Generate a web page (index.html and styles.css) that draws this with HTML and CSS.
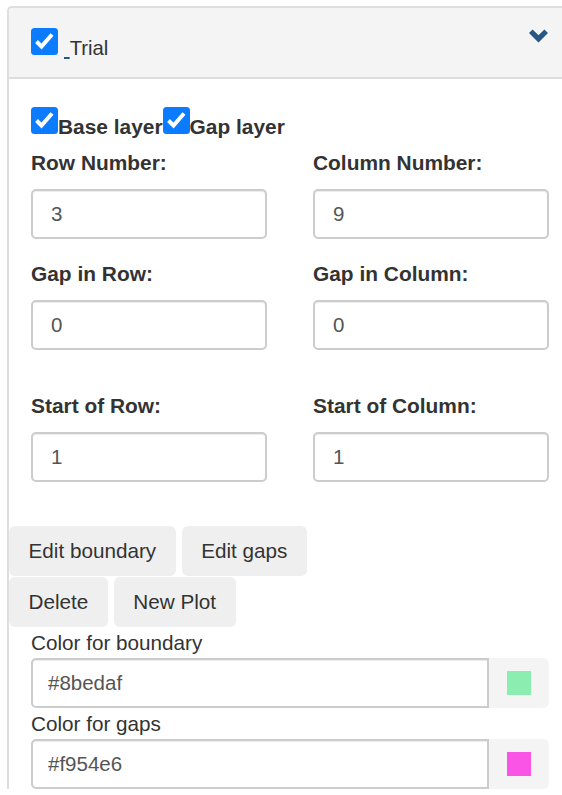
FILE: index.html
```html
<!DOCTYPE html>
<html>
<head>
<meta charset="utf-8">
<link rel="stylesheet" href="styles.css">
</head>
<body>
<div class="panel">
  <div class="panel-heading">
    <div class="title"><svg class="cb" width="27" height="27" viewBox="0 0 27 27"><rect x="0" y="0" width="27" height="27" rx="3.5" fill="#0b7bff"/><polyline points="5.5,13.5 10.5,18.5 21,6.5" fill="none" stroke="#fff" stroke-width="4"/></svg><a class="toggle">&nbsp;</a>Trial</div>
    <svg class="chevron" width="19" height="14" viewBox="0 0 19 14"><polygon points="0,4 3.6,0.4 9.5,6.3 15.4,0.4 19,4 9.5,13.5" fill="#275884"/></svg>
  </div>
  <div class="panel-body">
    <div class="layers"><svg class="cb" width="27" height="27" viewBox="0 0 27 27"><rect x="0" y="0" width="27" height="27" rx="3.5" fill="#0b7bff"/><polyline points="5.5,13.5 10.5,18.5 21,6.5" fill="none" stroke="#fff" stroke-width="4"/></svg><span>Base layer</span><svg class="cb" width="27" height="27" viewBox="0 0 27 27"><rect x="0" y="0" width="27" height="27" rx="3.5" fill="#0b7bff"/><polyline points="5.5,13.5 10.5,18.5 21,6.5" fill="none" stroke="#fff" stroke-width="4"/></svg><span>Gap layer</span></div>

    <div class="pair first">
      <div class="field"><label class="lbl">Row Number:</label><input class="ctl" type="text" value="3"></div>
      <div class="field"><label class="lbl">Column Number:</label><input class="ctl" type="text" value="9"></div>
    </div>
    <div class="pair second">
      <div class="field"><label class="lbl">Gap in Row:</label><input class="ctl" type="text" value="0"></div>
      <div class="field"><label class="lbl">Gap in Column:</label><input class="ctl" type="text" value="0"></div>
    </div>
    <div class="pair third">
      <div class="field"><label class="lbl">Start of Row:</label><input class="ctl" type="text" value="1"></div>
      <div class="field"><label class="lbl">Start of Column:</label><input class="ctl" type="text" value="1"></div>
    </div>

    <div class="actions">
      <div class="btn-row"><button class="btn">Edit boundary</button><button class="btn">Edit gaps</button></div>
      <div class="btn-row"><button class="btn">Delete</button><button class="btn">New Plot</button></div>
    </div>

    <div class="colors">
      <label class="clbl">Color for boundary</label>
      <div class="igroup"><input class="cinput" type="text" value="#8bedaf"><span class="addon"><i class="swatch green"></i></span></div>
      <label class="clbl">Color for gaps</label>
      <div class="igroup"><input class="cinput" type="text" value="#f954e6"><span class="addon"><i class="swatch pink"></i></span></div>
    </div>
  </div>
</div>
</body>
</html>
```

FILE: styles.css
```css
html, body {
  margin: 0;
  padding: 0;
  overflow: hidden;
  background: #fff;
}
body {
  font-family: "Liberation Sans", Arial, sans-serif;
  font-size: 20.7px;
  color: #333;
}
.panel {
  margin: 6px 0 0 7px;
  border-top: 2px solid #dedede;
  border-left: 2px solid #dedede;
  border-top-left-radius: 5px;
}
.panel-heading {
  background: #f4f4f4;
  border-bottom: 2px solid #dedede;
  border-top-left-radius: 4px;
  padding: 20px 14px 19px 22px;
  display: flex;
  justify-content: space-between;
  align-items: flex-start;
}
.title {
  line-height: 20px;
  font-size: 20.3px;
  color: #333;
}
.cb {
  vertical-align: baseline;
}
.toggle {
  margin-left: 6px;
  color: #275884;
  text-decoration: underline;
  text-decoration-thickness: 2px;
  text-underline-offset: 2px;
}
.chevron {
  display: block;
  margin-top: 1px;
}
.panel-body {
  padding: 28px 13px 0 22px;
}
.layers {
  line-height: 20px;
  font-weight: bold;
  font-size: 20.9px;
}
.pair {
  display: grid;
  grid-template-columns: 1fr 1fr;
  column-gap: 46px;
}
.pair.first { margin-top: 16px; }
.pair.second { margin-top: 25px; }
.pair.third { margin-top: 46px; }
.field {
  display: flex;
  flex-direction: column;
}
.lbl {
  font-weight: bold;
  font-size: 20.9px;
  line-height: 20px;
  margin-bottom: 16px;
}
.ctl {
  box-sizing: border-box;
  height: 50px;
  width: 100%;
  border: 2px solid #ccc;
  border-radius: 5px;
  padding: 0 18px;
  font-family: inherit;
  font-size: 20.5px;
  color: #555;
  background: #fff;
  box-shadow: inset 0 1px 1px rgba(0,0,0,0.075);
  outline: none;
}
.actions {
  margin: 44px 0 0 -22px;
  display: flex;
  flex-direction: column;
  gap: 1px;
}
.btn-row {
  display: flex;
  gap: 6px;
}
.btn {
  height: 50px;
  padding: 0 19.5px;
  border: none;
  border-radius: 6px;
  background: #efefef;
  font-family: inherit;
  font-size: 20.7px;
  color: #333;
}
.colors {
  margin-top: 6px;
}
.clbl {
  display: block;
  line-height: 20px;
  margin-bottom: 5px;
}
.igroup {
  display: flex;
  height: 50px;
  margin-bottom: 6px;
}
.cinput {
  box-sizing: border-box;
  flex: 1;
  min-width: 0;
  height: 50px;
  border: 2px solid #ccc;
  border-radius: 5px 0 0 5px;
  padding: 0 15px;
  font-family: inherit;
  font-size: 20.5px;
  color: #555;
  background: #fff;
  box-shadow: inset 0 1px 1px rgba(0,0,0,0.075);
  outline: none;
}
.addon {
  width: 60px;
  background: #f4f4f4;
  border-radius: 0 6px 6px 0;
  display: flex;
  align-items: center;
  justify-content: center;
}
.swatch {
  display: block;
  width: 24px;
  height: 24px;
}
.swatch.green { background: #8bedaf; }
.swatch.pink { background: #f954e6; }
```
